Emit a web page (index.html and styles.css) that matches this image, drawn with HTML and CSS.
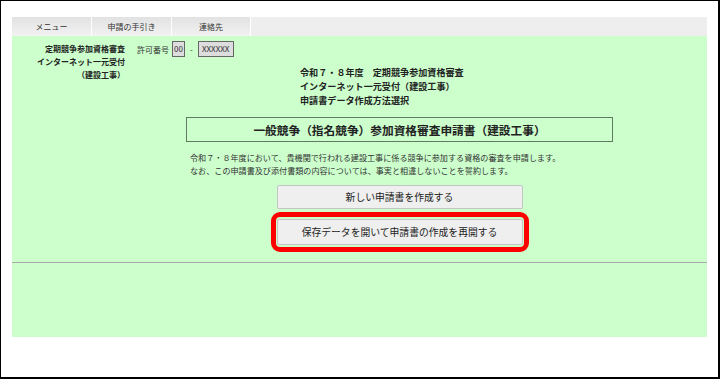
FILE: index.html
```html
<!DOCTYPE html>
<html lang="ja">
<head>
<meta charset="utf-8">
<link rel="stylesheet" href="styles.css">
</head>
<body>
<div class="frame">
  <div class="tabs">
    <div class="tab">メニュー</div>
    <div class="tab">申請の手引き</div>
    <div class="tab">連絡先</div>
  </div>
  <div class="panel">
    <div class="top">
      <div class="left">
        <div class="org">定期競争参加資格審査<br>インターネット一元受付<br>（建設工事）</div>
        <div class="permit">
          <span class="permit-label">許可番号</span>
          <span class="box">00</span>
          <span class="dash">-</span>
          <span class="box box-wide">XXXXXX</span>
        </div>
      </div>
      <div class="heading">令和７・８年度　定期競争参加資格審査<br>インターネット一元受付（建設工事）<br>申請書データ作成方法選択</div>
    </div>
    <div class="column">
      <div class="title-box">一般競争（指名競争）参加資格審査申請書（建設工事）</div>
      <p class="para">令和７・８年度において、貴機関で行われる建設工事に係る競争に参加する資格の審査を申請します。<br>なお、この申請書及び添付書類の内容については、事実と相違しないことを誓約します。</p>
      <div class="actions">
        <button class="btn">新しい申請書を作成する</button>
        <div class="ring"><button class="btn btn-2">保存データを開いて申請書の作成を再開する</button></div>
      </div>
    </div>
    <div class="rule"></div>
  </div>
</div>
</body>
</html>
```
FILE: styles.css
```css
* { box-sizing: border-box; }
html, body { margin: 0; padding: 0; background: #fff; }
body {
  font-family: "Noto Sans CJK JP", "Noto Sans", sans-serif;
  color: #222;
}
.frame {
  width: 720px;
  height: 379px;
  border: 1px solid #000;
  border-right-width: 2px;
  border-bottom-width: 2px;
  padding: 16px 11px 0 11px;
}
.tabs {
  display: flex;
  height: 19px;
  background: #eeeeee;
}
.tab {
  width: 80px;
  border-right: 1px solid #fff;
  background: linear-gradient(#e2e2e2, #f2f2f2);
  font-size: 8px;
  line-height: 19px;
  text-align: center;
  color: #333;
}
.tab:nth-child(3) { width: 79px; }
.panel {
  background: #ccffcc;
  height: 301px;
  padding-top: 0;
}
.top {
  display: grid;
  grid-template-columns: 288px 1fr;
}
.left {
  display: flex;
  align-items: flex-start;
}
.org {
  width: 113px;
  padding-top: 6px;
  text-align: right;
  font-size: 8px;
  line-height: 13px;
  font-weight: bold;
  color: #222;
}
.permit {
  display: flex;
  align-items: center;
  margin-left: 12px;
  padding-top: 5px;
  font-size: 8px;
  color: #333;
}
.permit-label { margin-right: 3px; }
.box {
  display: inline-block;
  height: 16px;
  line-height: 14px;
  padding: 0 1px;
  border: 1px solid #666;
  background: #dddddd;
  font-size: 8px;
  color: #333;
}
.box-wide { width: 36px; text-align: center; }
.dash { margin: 0 5px; }
.heading {
  padding-top: 29px;
  font-size: 9.1px;
  line-height: 14px;
  font-weight: bold;
  color: #222;
}
.column {
  margin-left: 174px;
  width: 427px;
}
.title-box {
  margin-top: 10px;
  height: 25px;
  border: 1px solid #5f7a5f;
  text-align: center;
  font-size: 11.7px;
  font-weight: bold;
  line-height: 23px;
  color: #222;
}
.para {
  margin: 9px 0 0 4px;
  font-size: 8.1px;
  line-height: 13px;
  color: #333;
  white-space: nowrap;
}
.actions {
  display: flex;
  flex-direction: column;
  align-items: center;
  margin-top: 8px;
}
.btn {
  display: block;
  width: 246px;
  height: 24px;
  margin: 0;
  padding: 0;
  border: 1px solid #c4c4c4;
  border-radius: 2px;
  background: #efefef;
  font-family: "Noto Sans CJK JP", "Noto Sans", sans-serif;
  font-size: 9.8px;
  color: #222;
}
.ring {
  margin-top: 3px;
  border: 5px solid #ff0000;
  border-radius: 9px;
  padding: 2px 1px 2px 1px;
}
.btn-2 { height: 26px; }
.rule {
  margin-top: 10px;
  height: 1px;
  background: #aaaaaa;
}
```
